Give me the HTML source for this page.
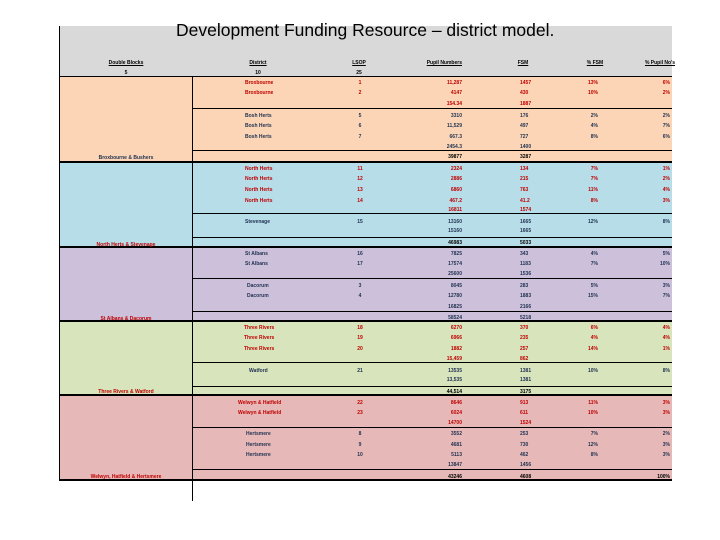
<!DOCTYPE html>
<html><head><meta charset="utf-8"><style>
body{margin:0;width:720px;height:540px;background:#fff;position:relative;overflow:hidden;font-family:"Liberation Sans",sans-serif}
div{position:absolute}
.t{font-size:5px;font-weight:bold;white-space:nowrap;line-height:6px;height:6px;margin-top:-3px}
.n{color:#1f3050}.r{color:#c00000}.k{color:#000}
.c{width:80px;text-align:center;margin-left:-40px}
.rt{text-align:right;width:80px;margin-left:-80px}
.hl{left:192px;width:480px;height:1px;background:#000}
.th{left:60px;width:612px;height:2px;background:#000}
u{text-decoration:underline}
</style></head><body>
<div style="left:60px;top:26px;width:612px;height:51px;background:#d9d9d9"></div>
<div style="left:60px;top:77px;width:612px;height:85px;background:#fbd5b5"></div>
<div style="left:60px;top:162px;width:612px;height:85px;background:#b7dde8"></div>
<div style="left:60px;top:247px;width:612px;height:74px;background:#ccc0da"></div>
<div style="left:60px;top:321px;width:612px;height:74px;background:#d7e4bc"></div>
<div style="left:60px;top:395px;width:612px;height:85px;background:#e6b9b8"></div>
<div style="left:59px;top:26px;width:1px;height:455px;background:#000"></div>
<div style="left:192px;top:77px;width:1px;height:424px;background:#000"></div>
<div style="left:60px;top:76px;width:612px;height:1px;background:#000"></div>
<div class="hl" style="top:108px"></div><div class="hl" style="top:150px"></div>
<div class="th" style="top:161px"></div>
<div class="hl" style="top:213px"></div><div class="hl" style="top:237px"></div>
<div class="th" style="top:246px"></div>
<div class="hl" style="top:278px"></div><div class="hl" style="top:311px"></div>
<div class="th" style="top:320px"></div>
<div class="hl" style="top:362px"></div><div class="hl" style="top:386px"></div>
<div class="th" style="top:394px"></div>
<div class="hl" style="top:427px"></div><div class="hl" style="top:469px"></div>
<div class="th" style="top:479px"></div>
<div style="left:176px;top:20px;font-size:17.5px;line-height:20px;white-space:nowrap;color:#000">Development Funding Resource – district model.</div>

<div class="t k c" style="left:126px;top:63px"><u>Double Blocks</u></div>
<div class="t k c" style="left:258px;top:63px"><u>District</u></div>
<div class="t k c" style="left:359px;top:63px"><u>LSOP</u></div>
<div class="t k rt" style="left:462px;top:63px"><u>Pupil Numbers</u></div>
<div class="t k c" style="left:523px;top:63px"><u>FSM</u></div>
<div class="t k c" style="left:595px;top:63px"><u>% FSM</u></div>
<div class="t k c" style="left:660px;top:63px"><u>% Pupil No's</u></div>
<div class="t k c" style="left:126px;top:73px">5</div>
<div class="t k c" style="left:258px;top:73px">10</div>
<div class="t k c" style="left:359px;top:73px">25</div>

<div class="t n c" style="left:126px;top:158px">Broxbourne &amp; Bushers</div>
<div class="t r c" style="left:126px;top:245px">North Herts &amp; Stevenage</div>
<div class="t r c" style="left:126px;top:319px">St Albans &amp; Dacorum</div>
<div class="t r c" style="left:126px;top:392px">Three Rivers &amp; Watford</div>
<div class="t r c" style="left:126px;top:477px">Welwyn, Hatfield &amp; Hertsmere</div>

<div class="t r" style="left:245px;top:83px">Broxbourne</div><div class="t r c" style="left:360px;top:83px">1</div><div class="t r rt" style="left:462px;top:83px">11,287</div><div class="t r" style="left:520px;top:83px">1457</div><div class="t r rt" style="left:598px;top:83px">13%</div><div class="t r rt" style="left:670px;top:83px">6%</div>
<div class="t r" style="left:245px;top:93px">Broxbourne</div><div class="t r c" style="left:360px;top:93px">2</div><div class="t r rt" style="left:462px;top:93px">4147</div><div class="t r" style="left:520px;top:93px">430</div><div class="t r rt" style="left:598px;top:93px">10%</div><div class="t r rt" style="left:670px;top:93px">2%</div>
<div class="t r rt" style="left:462px;top:104px">154.34</div><div class="t r" style="left:520px;top:104px">1887</div>
<div class="t n" style="left:245px;top:116px">Bosh Herts</div><div class="t n c" style="left:360px;top:116px">5</div><div class="t n rt" style="left:462px;top:116px">3310</div><div class="t n" style="left:520px;top:116px">176</div><div class="t n rt" style="left:598px;top:116px">2%</div><div class="t n rt" style="left:670px;top:116px">2%</div>
<div class="t n" style="left:245px;top:126px">Bosh Herts</div><div class="t n c" style="left:360px;top:126px">6</div><div class="t n rt" style="left:462px;top:126px">11,529</div><div class="t n" style="left:520px;top:126px">497</div><div class="t n rt" style="left:598px;top:126px">4%</div><div class="t n rt" style="left:670px;top:126px">7%</div>
<div class="t n" style="left:245px;top:137px">Bosh Herts</div><div class="t n c" style="left:360px;top:137px">7</div><div class="t n rt" style="left:462px;top:137px">667.3</div><div class="t n" style="left:520px;top:137px">727</div><div class="t n rt" style="left:598px;top:137px">8%</div><div class="t n rt" style="left:670px;top:137px">6%</div>
<div class="t n rt" style="left:462px;top:147px">2454.3</div><div class="t n" style="left:520px;top:147px">1400</div>
<div class="t k rt" style="left:462px;top:157px">39877</div><div class="t k" style="left:520px;top:157px">3287</div>

<div class="t r" style="left:245px;top:169px">North Herts</div><div class="t r c" style="left:360px;top:169px">11</div><div class="t r rt" style="left:462px;top:169px">2324</div><div class="t r" style="left:520px;top:169px">134</div><div class="t r rt" style="left:598px;top:169px">7%</div><div class="t r rt" style="left:670px;top:169px">1%</div>
<div class="t r" style="left:245px;top:179px">North Herts</div><div class="t r c" style="left:360px;top:179px">12</div><div class="t r rt" style="left:462px;top:179px">2886</div><div class="t r" style="left:520px;top:179px">215</div><div class="t r rt" style="left:598px;top:179px">7%</div><div class="t r rt" style="left:670px;top:179px">2%</div>
<div class="t r" style="left:245px;top:190px">North Herts</div><div class="t r c" style="left:360px;top:190px">13</div><div class="t r rt" style="left:462px;top:190px">6860</div><div class="t r" style="left:520px;top:190px">763</div><div class="t r rt" style="left:598px;top:190px">11%</div><div class="t r rt" style="left:670px;top:190px">4%</div>
<div class="t r" style="left:245px;top:201px">North Herts</div><div class="t r c" style="left:360px;top:201px">14</div><div class="t r rt" style="left:462px;top:201px">467.2</div><div class="t r" style="left:520px;top:201px">41.2</div><div class="t r rt" style="left:598px;top:201px">8%</div><div class="t r rt" style="left:670px;top:201px">3%</div>
<div class="t r rt" style="left:462px;top:210px">16811</div><div class="t r" style="left:520px;top:210px">1574</div>
<div class="t n" style="left:245px;top:222px">Stevenage</div><div class="t n c" style="left:360px;top:222px">15</div><div class="t n rt" style="left:462px;top:222px">13160</div><div class="t n" style="left:520px;top:222px">1665</div><div class="t n rt" style="left:598px;top:222px">12%</div><div class="t n rt" style="left:670px;top:222px">8%</div>
<div class="t n rt" style="left:462px;top:231px">15160</div><div class="t n" style="left:520px;top:231px">1665</div>
<div class="t k rt" style="left:462px;top:243px">46983</div><div class="t k" style="left:520px;top:243px">5033</div>

<div class="t n" style="left:245px;top:254px">St Albans</div><div class="t n c" style="left:360px;top:254px">16</div><div class="t n rt" style="left:462px;top:254px">7825</div><div class="t n" style="left:520px;top:254px">343</div><div class="t n rt" style="left:598px;top:254px">4%</div><div class="t n rt" style="left:670px;top:254px">5%</div>
<div class="t n" style="left:245px;top:264px">St Albans</div><div class="t n c" style="left:360px;top:264px">17</div><div class="t n rt" style="left:462px;top:264px">17574</div><div class="t n" style="left:520px;top:264px">1183</div><div class="t n rt" style="left:598px;top:264px">7%</div><div class="t n rt" style="left:670px;top:264px">10%</div>
<div class="t n rt" style="left:462px;top:274px">25600</div><div class="t n" style="left:520px;top:274px">1536</div>
<div class="t n" style="left:247px;top:286px">Dacorum</div><div class="t n c" style="left:360px;top:286px">3</div><div class="t n rt" style="left:462px;top:286px">8045</div><div class="t n" style="left:520px;top:286px">283</div><div class="t n rt" style="left:598px;top:286px">5%</div><div class="t n rt" style="left:670px;top:286px">3%</div>
<div class="t n" style="left:247px;top:296px">Dacorum</div><div class="t n c" style="left:360px;top:296px">4</div><div class="t n rt" style="left:462px;top:296px">12780</div><div class="t n" style="left:520px;top:296px">1883</div><div class="t n rt" style="left:598px;top:296px">15%</div><div class="t n rt" style="left:670px;top:296px">7%</div>
<div class="t n rt" style="left:462px;top:307px">16825</div><div class="t n" style="left:520px;top:307px">2166</div>
<div class="t n rt" style="left:462px;top:318px">58524</div><div class="t n" style="left:520px;top:318px">5218</div>

<div class="t r" style="left:244px;top:328px">Three Rivers</div><div class="t r c" style="left:360px;top:328px">18</div><div class="t r rt" style="left:462px;top:328px">6270</div><div class="t r" style="left:520px;top:328px">370</div><div class="t r rt" style="left:598px;top:328px">6%</div><div class="t r rt" style="left:670px;top:328px">4%</div>
<div class="t r" style="left:244px;top:338px">Three Rivers</div><div class="t r c" style="left:360px;top:338px">19</div><div class="t r rt" style="left:462px;top:338px">6966</div><div class="t r" style="left:520px;top:338px">235</div><div class="t r rt" style="left:598px;top:338px">4%</div><div class="t r rt" style="left:670px;top:338px">4%</div>
<div class="t r" style="left:244px;top:349px">Three Rivers</div><div class="t r c" style="left:360px;top:349px">20</div><div class="t r rt" style="left:462px;top:349px">1882</div><div class="t r" style="left:520px;top:349px">257</div><div class="t r rt" style="left:598px;top:349px">14%</div><div class="t r rt" style="left:670px;top:349px">1%</div>
<div class="t r rt" style="left:462px;top:359px">15,459</div><div class="t r" style="left:520px;top:359px">862</div>
<div class="t n" style="left:249px;top:371px">Watford</div><div class="t n c" style="left:360px;top:371px">21</div><div class="t n rt" style="left:462px;top:371px">13535</div><div class="t n" style="left:520px;top:371px">1381</div><div class="t n rt" style="left:598px;top:371px">10%</div><div class="t n rt" style="left:670px;top:371px">8%</div>
<div class="t n rt" style="left:462px;top:380px">13,535</div><div class="t n" style="left:520px;top:380px">1381</div>
<div class="t k rt" style="left:462px;top:392px">44,514</div><div class="t k" style="left:520px;top:392px">3175</div>

<div class="t r" style="left:238px;top:403px">Welwyn &amp; Hatfield</div><div class="t r c" style="left:360px;top:403px">22</div><div class="t r rt" style="left:462px;top:403px">8646</div><div class="t r" style="left:520px;top:403px">913</div><div class="t r rt" style="left:598px;top:403px">11%</div><div class="t r rt" style="left:670px;top:403px">3%</div>
<div class="t r" style="left:238px;top:413px">Welwyn &amp; Hatfield</div><div class="t r c" style="left:360px;top:413px">23</div><div class="t r rt" style="left:462px;top:413px">6024</div><div class="t r" style="left:520px;top:413px">611</div><div class="t r rt" style="left:598px;top:413px">10%</div><div class="t r rt" style="left:670px;top:413px">3%</div>
<div class="t r rt" style="left:462px;top:423px">14700</div><div class="t r" style="left:520px;top:423px">1524</div>
<div class="t n" style="left:246px;top:434px">Hertsmere</div><div class="t n c" style="left:360px;top:434px">8</div><div class="t n rt" style="left:462px;top:434px">3552</div><div class="t n" style="left:520px;top:434px">253</div><div class="t n rt" style="left:598px;top:434px">7%</div><div class="t n rt" style="left:670px;top:434px">2%</div>
<div class="t n" style="left:246px;top:445px">Hertsmere</div><div class="t n c" style="left:360px;top:445px">9</div><div class="t n rt" style="left:462px;top:445px">4681</div><div class="t n" style="left:520px;top:445px">730</div><div class="t n rt" style="left:598px;top:445px">12%</div><div class="t n rt" style="left:670px;top:445px">3%</div>
<div class="t n" style="left:246px;top:455px">Hertsmere</div><div class="t n c" style="left:360px;top:455px">10</div><div class="t n rt" style="left:462px;top:455px">5113</div><div class="t n" style="left:520px;top:455px">462</div><div class="t n rt" style="left:598px;top:455px">8%</div><div class="t n rt" style="left:670px;top:455px">3%</div>
<div class="t n rt" style="left:462px;top:465px">13847</div><div class="t n" style="left:520px;top:465px">1456</div>
<div class="t k rt" style="left:462px;top:477px">43246</div><div class="t k" style="left:520px;top:477px">4608</div><div class="t k rt" style="left:670px;top:477px">100%</div>
</body></html>
